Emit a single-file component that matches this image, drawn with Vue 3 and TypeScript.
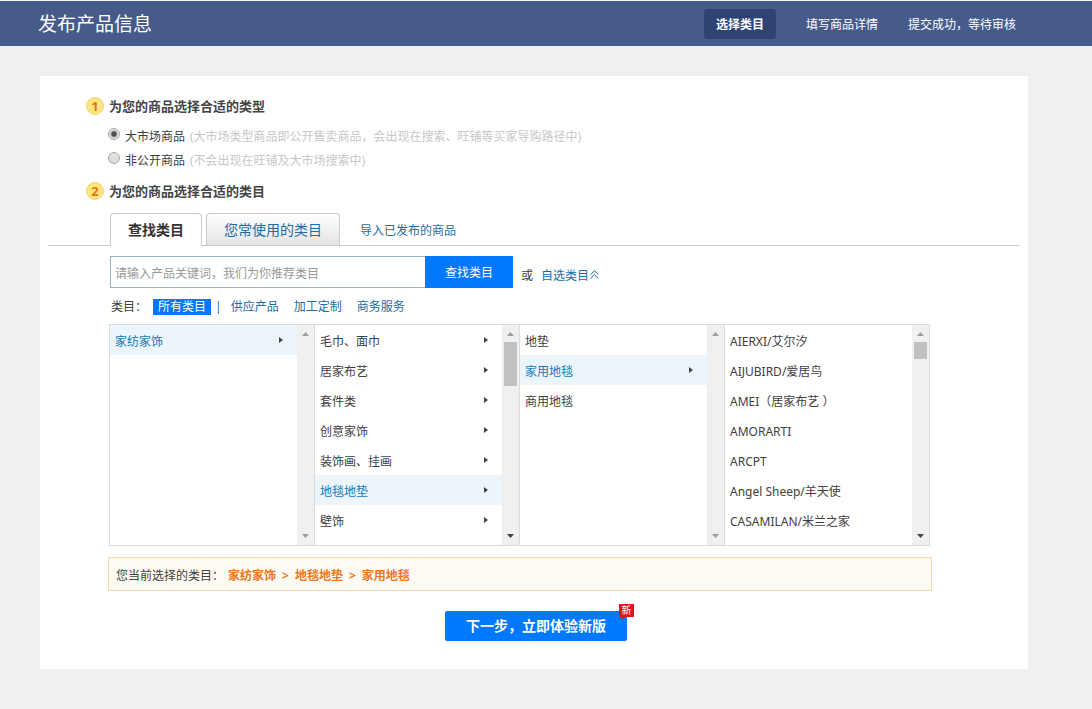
<script setup lang="ts">
import { computed, ref } from 'vue'

interface Column {
  items: string[]
  parents: string[]
  thumb: number
  canScrollDown: boolean
}

const steps = ['选择类目', '填写商品详情', '提交成功，等待审核']

const productTypes = [
  { value: 'public', label: '大市场商品', note: '(大市场类型商品即公开售卖商品，会出现在搜索、旺铺等买家导购路径中)' },
  { value: 'private', label: '非公开商品', note: '(不会出现在旺铺及大市场搜索中)' },
]
const productType = ref('public')

const tabs = ['查找类目', '您常使用的类目']
const activeTab = ref(0)

const keyword = ref('')
const filters = ['供应产品', '加工定制', '商务服务']

const secondLevel = ['毛巾、面巾', '居家布艺', '套件类', '创意家饰', '装饰画、挂画', '地毯地垫', '壁饰']
const columns: Column[] = [
  { items: ['家纺家饰'], parents: ['家纺家饰'], thumb: 0, canScrollDown: false },
  { items: secondLevel, parents: secondLevel, thumb: 44, canScrollDown: true },
  { items: ['地垫', '家用地毯', '商用地毯'], parents: ['家用地毯'], thumb: 0, canScrollDown: false },
  {
    items: ['AIERXI/艾尔汐', 'AIJUBIRD/爱居鸟', 'AMEI（居家布艺 ）', 'AMORARTI', 'ARCPT', 'Angel Sheep/羊天使', 'CASAMILAN/米兰之家'],
    parents: [],
    thumb: 17,
    canScrollDown: true,
  },
]
const selected = ref<string[]>(['家纺家饰', '地毯地垫', '家用地毯'])
const path = computed(() => selected.value.filter(Boolean))

function choose(column: number, item: string) {
  selected.value = [...selected.value.slice(0, column), item]
}
</script>

<template>
  <div class="page">
    <header class="topbar">
      <h1 class="title">发布产品信息</h1>
      <ol class="steps">
        <li v-for="(step, i) in steps" :key="step" class="step" :class="{ current: i === 0 }">{{ step }}</li>
      </ol>
    </header>

    <main class="panel">
      <section class="block">
        <h2 class="heading"><span class="num">1</span>为您的商品选择合适的类型</h2>
        <div class="types">
          <label v-for="type in productTypes" :key="type.value" class="type">
            <input v-model="productType" class="radio" type="radio" name="type" :value="type.value" />
            <span>{{ type.label }}</span>
            <span class="note">{{ type.note }}</span>
          </label>
        </div>
        <h2 class="heading"><span class="num">2</span>为您的商品选择合适的类目</h2>
      </section>

      <nav class="tabs">
        <button
          v-for="(tab, i) in tabs"
          :key="tab"
          type="button"
          class="tab"
          :class="{ active: activeTab === i }"
          @click="activeTab = i"
        >{{ tab }}</button>
        <a class="import" href="#">导入已发布的商品</a>
      </nav>

      <div class="content">
        <form class="search" @submit.prevent>
          <input v-model="keyword" class="keyword" type="text" aria-label="产品关键词" placeholder="请输入产品关键词，我们为你推荐类目" />
          <button class="find" type="submit">查找类目</button>
          <span class="or">或</span>
          <a class="self" href="#">自选类目<svg width="9" height="9" viewBox="0 0 9 9" fill="none" stroke="currentColor"><path d="M.5 4.5 4.5 .8l4 3.7M.5 8.5l4-3.7 4 3.7" /></svg></a>
        </form>

        <div class="filters">
          <span>类目：</span>
          <a class="all" href="#">所有类目</a>
          <span class="bar">|</span>
          <a v-for="filter in filters" :key="filter" class="filter" href="#">{{ filter }}</a>
        </div>

        <div class="columns">
          <div v-for="(column, c) in columns" :key="c" class="column">
            <ul class="list">
              <li v-for="item in column.items" :key="item">
                <button type="button" class="item" :class="{ chosen: selected[c] === item }" @click="choose(c, item)">
                  <span>{{ item }}</span>
                  <svg v-if="column.parents.includes(item)" class="caret" width="4" height="6" viewBox="0 0 4 6"><path d="M0 0l4 3-4 3z" fill="#444" /></svg>
                </button>
              </li>
            </ul>
            <div class="scroll" aria-hidden="true">
              <svg width="7" height="4" viewBox="0 0 7 4"><path d="M0 4 3.5 0 7 4z" fill="#9d9d9d" /></svg>
              <div v-if="column.thumb" class="thumb" :style="{ height: column.thumb + 'px' }"></div>
              <svg class="down" width="7" height="4" viewBox="0 0 7 4"><path d="M0 0h7L3.5 4z" :fill="column.canScrollDown ? '#444' : '#9d9d9d'" /></svg>
            </div>
          </div>
        </div>

        <p class="current-path">
          <span>您当前选择的类目：</span>
          <strong class="crumbs">
            <template v-for="(name, i) in path" :key="name">
              <span v-if="i > 0">&gt;</span>
              <span>{{ name }}</span>
            </template>
          </strong>
        </p>
      </div>

      <div class="actions">
        <button class="next" type="button">
          下一步，立即体验新版
          <span class="new">新</span>
        </button>
      </div>
    </main>
  </div>
</template>

<style>
body {
  margin: 0;
  background: #f0f0f0;
}
</style>

<style scoped>
.page {
  font: 12px/24px "Noto Sans", "Noto Sans CJK SC", sans-serif;
  color: #404040;
  overflow: hidden;
}
button,
input {
  font: inherit;
  color: inherit;
  margin: 0;
  padding: 0;
  border: 0;
  background: none;
  box-sizing: border-box;
}
button {
  cursor: pointer;
}
a {
  color: #1a6da8;
  text-decoration: none;
}
ul,
ol {
  list-style: none;
  margin: 0;
  padding: 0;
}
.topbar {
  display: flex;
  align-items: center;
  justify-content: space-between;
  height: 45px;
  padding: 0 76px 0 38px;
  border-top: 1px solid #f4f8fb;
  background: #475b8b;
  color: #fff;
}
.title {
  margin: 0;
  font-size: 19px;
  font-weight: 400;
}
.steps {
  display: flex;
  gap: 30px;
  line-height: 28px;
}
.step {
  padding-top: 2px;
}
.current {
  padding: 2px 12px 0;
  border-radius: 3px;
  background: #2f4475;
  font-weight: 700;
}
.panel {
  margin: 30px 64px 40px 40px;
  padding: 17px 8px 28px;
  background: #fff;
}
.block {
  padding-left: 38px;
}
.heading {
  display: flex;
  align-items: center;
  gap: 5px;
  margin: 0;
  font-size: 13px;
  line-height: 26px;
  color: #444;
}
.num {
  width: 16px;
  height: 16px;
  border: 1px solid #f5d66a;
  border-radius: 50%;
  background: #ffe680;
  color: #e8730c;
  line-height: 16px;
  text-align: center;
}
.types {
  padding: 6px 0 5px 22px;
}
.type {
  display: flex;
  gap: 5px;
}
.radio {
  appearance: none;
  width: 12px;
  height: 12px;
  margin-top: 3px;
  border: 1px solid #a8a8a8;
  border-radius: 50%;
  background: linear-gradient(#e4e4e4, #dadada);
}
.radio:checked {
  background: radial-gradient(circle, #505050 2px, #e6e6e6 4px);
}
.note {
  color: #c8c8c8;
}
.tabs {
  display: flex;
  align-items: flex-end;
  gap: 4px;
  margin-top: 9px;
  padding-left: 62px;
  border-bottom: 1px solid #ccc;
}
.tab {
  height: 32px;
  padding: 0 17px;
  border: 1px solid #ccc;
  border-bottom: 0;
  border-radius: 4px 4px 0 0;
  background: linear-gradient(#fff, #e4e4e4);
  color: #1a6da8;
  font-size: 14px;
}
.tab.active {
  height: 33px;
  margin-bottom: -1px;
  background: #fff;
  color: #333;
  font-weight: 700;
}
.import {
  margin-left: 16px;
  line-height: 28px;
}
.content {
  padding: 10px 88px 0 60px;
}
.search {
  display: flex;
  align-items: center;
  padding-left: 2px;
}
.keyword {
  width: 315px;
  height: 32px;
  padding: 2px 4px 0;
  border: 1px solid #9db3c4;
  border-right: 0;
}
.keyword::placeholder {
  color: #999;
  opacity: 1;
}
.find {
  width: 88px;
  height: 32px;
  padding-top: 2px;
  background: #0078ff;
  color: #fff;
}
.or {
  margin: 8px 8px 0;
}
.self {
  margin-top: 8px;
}
.self svg {
  margin-left: 1px;
  vertical-align: 1px;
}
.filters {
  display: flex;
  align-items: center;
  height: 36px;
  padding: 2px 0 0 3px;
  box-sizing: border-box;
}
.all {
  margin: 0 4px 0 6px;
  padding: 0 5px;
  background: #0078ff;
  color: #fff;
  line-height: 16px;
}
.bar {
  color: #1a6da8;
}
.filter {
  margin-left: 15px;
}
.bar + .filter {
  margin-left: 9px;
}
.columns {
  display: flex;
  height: 220px;
  margin: 0 2px 0 1px;
  border: 1px solid #d9dcde;
  border-right: 0;
}
.column {
  display: flex;
  flex: 1;
  min-width: 0;
  border-right: 1px solid #d9dcde;
}
.list {
  flex: 1;
  min-width: 0;
  overflow: hidden;
}
.item {
  display: flex;
  align-items: center;
  justify-content: space-between;
  width: 100%;
  height: 30px;
  padding: 3px 14px 0 5px;
  white-space: nowrap;
}
.item.chosen {
  background: #ecf5fb;
  color: #1279bd;
}
.caret {
  margin-bottom: 4px;
}
.scroll {
  display: flex;
  flex-direction: column;
  align-items: center;
  gap: 6px;
  width: 17px;
  padding: 7px 0;
  background: #f0f0f0;
  box-sizing: border-box;
}
.thumb {
  width: 13px;
  background: #c1c1c1;
}
.down {
  margin-top: auto;
}
.current-path {
  display: flex;
  gap: 4px;
  margin: 11px 0 0;
  padding: 6px 7px 2px;
  border: 1px solid #f7dcae;
  background: #fffbf2;
}
.crumbs {
  display: flex;
  gap: 6px;
  color: #ed7620;
}
.actions {
  margin-top: 20px;
  padding-left: 4px;
}
.next {
  position: relative;
  display: block;
  height: 30px;
  margin: 0 auto;
  padding: 0 21px;
  border-radius: 2px;
  background: #0078ff;
  color: #fff;
  font-size: 14px;
  font-weight: 700;
}
.new {
  position: absolute;
  top: -7px;
  right: -7px;
  width: 15px;
  height: 13px;
  background: #dc1420;
  font-size: 10px;
  font-weight: 400;
  line-height: 13px;
}
.new::after {
  content: "";
  position: absolute;
  top: 13px;
  left: 2px;
  border-top: 3px solid #dc1420;
  border-right: 4px solid transparent;
}
</style>
